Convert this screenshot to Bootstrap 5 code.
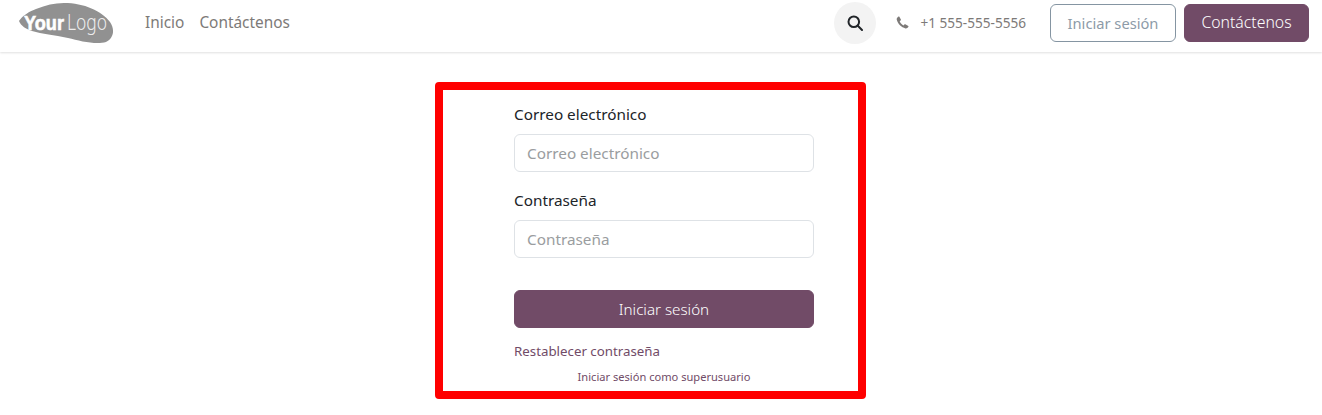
<!DOCTYPE html>
<html lang="es">
<head>
  <meta charset="UTF-8">
  <meta name="viewport" content="width=device-width, initial-scale=1.0">
  <title>Iniciar sesión</title>
  <link href="https://cdn.jsdelivr.net/npm/bootstrap@5.3.2/dist/css/bootstrap.min.css" rel="stylesheet">
  <style>
    body {
      font-family: "Noto Sans", "Open Sans", sans-serif;
      font-size: 15px;
      color: #212529;
      background-color: #fff;
      overflow: hidden;
    }
    .top-bar {
      height: 52px;
      padding: 0 13px 6px 18px;
      box-shadow: 0 1px 2px rgba(0, 0, 0, 0.12);
    }
    .brand-logo {
      width: 96px;
      height: 46px;
      display: block;
    }
    .main-links {
      margin-left: 31px;
      gap: 15px;
    }
    .main-links a {
      color: #7d7a78;
      text-decoration: none;
      font-size: 15.4px;
    }
    .search-circle {
      width: 42px;
      height: 42px;
      border-radius: 50%;
      background-color: #f3f3f3;
      border: 0;
      margin-right: 20px;
    }
    .phone-link {
      color: #7d7a78;
      font-size: 13.6px;
      margin-right: 24px;
      gap: 11px;
    }
    .btn-login-outline {
      border: 1px solid #8595a2;
      color: #8d9ba8;
      background: #fff;
      border-radius: 6px;
      height: 38px;
      width: 126px;
      padding: 0;
      font-size: 14.7px;
      margin-right: 8px;
    }
    .btn-plum {
      background-color: #714b67;
      border: 1px solid #714b67;
      color: #fff;
      border-radius: 6px;
      height: 38px;
      padding: 0;
      font-size: 15.2px;
      font-weight: 300;
    }
    .btn-plum:hover { background-color: #624159; color: #fff; }
    .btn-contact { width: 125px; font-size: 15.8px; }
    .red-frame {
      width: 431px;
      height: 317px;
      margin: 30px 0 0 435px;
      border: 8px solid #ff0000;
      border-radius: 4px;
    }
    .login-form {
      width: 300px;
      margin-left: 71px;
      padding-top: 12px;
    }
    .login-form .form-label {
      font-size: 15.3px;
      line-height: 24px;
      margin-bottom: 8px;
      display: block;
    }
    .login-form .form-control {
      height: 38px;
      font-size: 15.3px;
      padding: 0 12px;
      border: 1px solid #dee2e6;
      border-radius: 6px;
    }
    .login-form .form-control::placeholder { color: #9a9da0; }
    .field-wrap { margin-bottom: 16px; }
    .submit-wrap { padding-top: 16px; }
    .reset-link {
      display: block;
      color: #714b67;
      text-decoration: none;
      font-size: 13.3px;
      line-height: 20px;
      margin-top: 13px;
    }
    .super-link {
      display: block;
      color: #714b67;
      text-decoration: none;
      font-size: 11.1px;
      line-height: 16px;
      margin-top: 8px;
      text-align: center;
    }
  </style>
</head>
<body>
  <nav class="top-bar d-flex align-items-center bg-white">
    <a href="#" aria-label="Your Logo">
      <svg class="brand-logo" viewBox="0 0 96 46">
        <path d="M1 21 C4 16 12 11 18 9 C28 5 36 3 46 3 C66 3 84 11 92 22 C97 29 96 38 88 42 C78 45 62 41 50 38 C36 35 24 34 14 31 C8 29 3 26 1 21 Z" fill="#919191"/>
        <text x="6" y="30" font-family="Liberation Sans, sans-serif" font-size="21" font-weight="700" fill="#fff" stroke="#fff" stroke-width="0.6" textLength="40" lengthAdjust="spacingAndGlyphs">Your</text>
        <text x="49" y="30" font-family="Noto Sans, sans-serif" font-size="21" font-weight="300" fill="#fff" fill-opacity="0.85" textLength="40" lengthAdjust="spacingAndGlyphs">Logo</text>
      </svg>
    </a>
    <div class="main-links d-flex">
      <a href="#">Inicio</a>
      <a href="#">Contáctenos</a>
    </div>
    <div class="ms-auto d-flex align-items-center">
      <button class="search-circle d-flex align-items-center justify-content-center" aria-label="Buscar">
        <svg width="16" height="16" viewBox="0 0 16 16" fill="none" stroke="#212529" stroke-width="2">
          <circle cx="6.8" cy="6.8" r="5.3"/>
          <line x1="10.8" y1="10.8" x2="15" y2="15" stroke-linecap="round"/>
        </svg>
      </button>
      <span class="phone-link d-flex align-items-center">
        <svg width="13" height="13" viewBox="0 0 13 13">
          <path d="M3.2 0.6 L4.9 3.6 C5 4 4.9 4.3 4.6 4.5 L3.7 5.3 C4.3 6.9 5.6 8.4 7.4 9.4 L8.4 8.4 C8.7 8.1 9 8.1 9.3 8.2 L12.3 10 C12.6 10.2 12.6 10.5 12.4 10.8 C11.6 12 10.6 12.6 9.5 12.4 C5.5 11.6 1.6 7.8 0.7 3.6 C0.5 2.5 1.2 1.4 2.5 0.5 C2.8 0.3 3.1 0.4 3.2 0.6 Z" fill="#7d7a78"/>
        </svg>
        +1 555-555-5556
      </span>
      <button class="btn btn-login-outline">Iniciar sesión</button>
      <button class="btn btn-plum btn-contact">Contáctenos</button>
    </div>
  </nav>

  <main class="red-frame">
    <form class="login-form" onsubmit="return false">
      <div class="field-wrap">
        <label class="form-label" for="login">Correo electrónico</label>
        <input type="text" class="form-control" id="login" placeholder="Correo electrónico">
      </div>
      <div class="field-wrap">
        <label class="form-label" for="password">Contraseña</label>
        <input type="password" class="form-control" id="password" placeholder="Contraseña">
      </div>
      <div class="submit-wrap">
        <button type="submit" class="btn btn-plum w-100">Iniciar sesión</button>
      </div>
      <a href="#" class="reset-link">Restablecer contraseña</a>
      <a href="#" class="super-link">Iniciar sesión como superusuario</a>
    </form>
  </main>
  <script src="https://cdn.jsdelivr.net/npm/bootstrap@5.3.2/dist/js/bootstrap.bundle.min.js"></script>
</body>
</html>
